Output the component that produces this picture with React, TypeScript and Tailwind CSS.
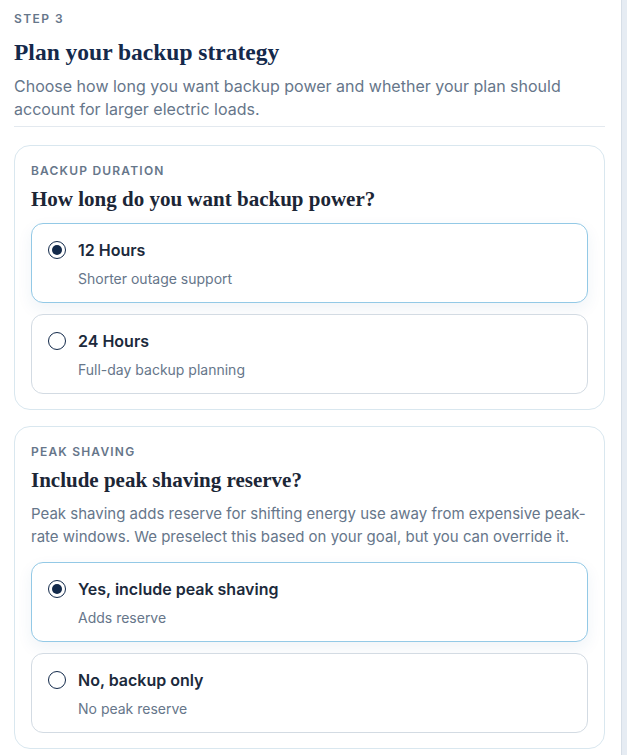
import {useState} from "react"


type Choice = {
  id: string
  title: string
  hint: string
}


const durations: Choice[] = [
  {id: "12", title: "12 Hours", hint: "Shorter outage support"},
  {id: "24", title: "24 Hours", hint: "Full-day backup planning"}
]

const shaving: Choice[] = [
  {id: "yes", title: "Yes, include peak shaving", hint: "Adds reserve"},
  {id: "no", title: "No, backup only", hint: "No peak reserve"}
]


function Option({choice, checked, onPick}: {choice: Choice, checked: boolean, onPick: () => void}) {
  return (
    <label className={`flex gap-3 bg-white border rounded-xl px-4 pt-3.5 pb-[13px] cursor-pointer ${checked ? "border-[#93c9e6] shadow-[0_6px_16px_rgba(30,90,140,0.07)]" : "border-[#d3dbe3]"}`}>
      <input type="radio" checked={checked} onChange={onPick} className="sr-only"/>
      <span className="mt-[3px] flex items-center justify-center w-[18px] h-[18px] rounded-full border-[1.5px] border-[#12294a] shrink-0">
        {checked && <span className="w-[10px] h-[10px] rounded-full bg-[#12294a]"/>}
      </span>
      <span className="flex flex-col">
        <span className="text-[16px] leading-6 font-semibold text-[#1c2a3c]">{choice.title}</span>
        <span className="mt-[7px] text-[14px] leading-5 text-[#66768a]">{choice.hint}</span>
      </span>
    </label>
  )
}


function Section({label, question, children}: {label: string, question: string, children: React.ReactNode}) {
  return (
    <section className="bg-white border border-[#d9e7ef] rounded-2xl px-4 pt-[17px] pb-[15px]">
      <p className="text-[12px] leading-4 font-semibold tracking-[0.1em] uppercase text-[#66768a]">{label}</p>
      <h2 className="mt-1.5 font-['Liberation_Serif',serif] text-[21px] leading-7 font-bold text-[#1c2636]">{question}</h2>
      {children}
    </section>
  )
}


export default function App() {
  const [hours, setHours] = useState("12"),
        [peak, setPeak] = useState("yes")

  return (
    <div className="flex min-h-screen bg-white font-['Inter','Liberation_Sans',sans-serif]">
      <main className="w-[621px] shrink-0 pl-[14px] pr-4 pt-[11px] pb-4">
        <header className="border-b border-[#e3e9ef] pb-[5px]">
          <p className="text-[12px] leading-4 font-semibold tracking-[0.12em] text-[#66768a]">STEP 3</p>
          <h1 className="mt-2.5 font-['Liberation_Serif',serif] text-[23.5px] leading-[30px] font-bold text-[#14294b]">
            Plan your backup strategy
          </h1>
          <p className="mt-2 text-[16px] leading-[23px] text-[#66768a]">
            Choose how long you want backup power and whether your plan should account for larger electric loads.
          </p>
        </header>

        <div className="mt-[18px] flex flex-col gap-4">
          <Section label="Backup duration" question="How long do you want backup power?">
            <div className="mt-2.5 flex flex-col gap-[11px]">
              {durations.map(d => (
                <Option key={d.id} choice={d} checked={hours === d.id} onPick={() => setHours(d.id)}/>
              ))}
            </div>
          </Section>

          <Section label="Peak shaving" question="Include peak shaving reserve?">
            <p className="mt-2 text-[15px] leading-[23px] text-[#66768a]">
              Peak shaving adds reserve for shifting energy use away from expensive peak-rate windows. We preselect this based on your goal, but you can override it.
            </p>
            <div className="mt-3.5 flex flex-col gap-[11px]">
              {shaving.map(s => (
                <Option key={s.id} choice={s} checked={peak === s.id} onPick={() => setPeak(s.id)}/>
              ))}
            </div>
          </Section>
        </div>
      </main>
      <div className="flex-1 bg-[#e6ecf3] border-l border-[#d6dee7]"/>
    </div>
  )
}
